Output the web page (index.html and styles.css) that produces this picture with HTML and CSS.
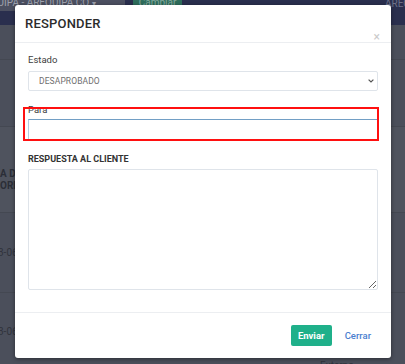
FILE: index.html
```html
<!DOCTYPE html>
<html lang="es">
<head>
<meta charset="utf-8">
<title>Responder</title>
<link rel="stylesheet" href="styles.css">
</head>
<body>
<div class="page">
  <div class="topbar">
    <div class="topbar-row">
      <div class="loc">AREQUIPA - AREQUIPA - AREQUIPA CO <span class="caret">▾</span></div>
      <div class="btn-cambiar">Cambiar</div>
      <div class="spacer"></div>
      <div class="user">AREQUIPA</div>
    </div>
  </div>
  <div class="bg-row r1"></div>
  <div class="bg-row r2"></div>
  <div class="bg-row head"><span>A DE</span><span>ORMA</span></div>
  <div class="bg-row r3"><span>3-06</span></div>
  <div class="bg-row r4"><span>3-06</span><span class="ext">Externo</span></div>
</div>

<div class="modal">
  <div class="modal-header">
    <h2 class="modal-title">RESPONDER</h2>
    <span class="close">×</span>
  </div>
  <div class="modal-body">
    <label class="field-label">Estado</label>
    <div class="select">
      <span>DESAPROBADO</span>
      <svg class="chev" width="6" height="4" viewBox="0 0 6 4"><path d="M0.6 0.6 L3 3 L5.4 0.6" fill="none" stroke="#555" stroke-width="1.2"/></svg>
    </div>
    <div class="group-para">
      <label class="field-label">Para</label>
      <input class="input" type="text">
      <div class="annot"></div>
    </div>
    <label class="field-label bold">RESPUESTA AL CLIENTE</label>
    <textarea class="textarea"></textarea>
  </div>
  <div class="modal-footer">
    <button class="btn-enviar">Enviar</button>
    <button class="btn-cerrar">Cerrar</button>
  </div>
</div>
</body>
</html>
```

FILE: styles.css
```css
* { box-sizing: border-box; }
html, body { margin: 0; padding: 0; }
body {
  width: 405px;
  height: 364px;
  overflow: hidden;
  position: relative;
  background: #4b4f5b;
  font-family: Roboto, "Liberation Sans", sans-serif;
}

/* backdrop page */
.page { width: 405px; }
.topbar {
  height: 25px;
  background: #2a2f4e;
  overflow: hidden;
}
.topbar-row {
  display: flex;
  align-items: center;
  height: 16px;
  margin-top: -5px;
  font-size: 10px;
}
.loc {
  width: 125px;
  height: 16px;
  line-height: 16px;
  background: #4c5061;
  color: #9ea1ad;
  white-space: nowrap;
  overflow: hidden;
  text-indent: -82px;
}
.caret { font-size: 8px; }
.btn-cambiar {
  margin-left: 8px;
  width: 49px;
  height: 16px;
  line-height: 16px;
  text-align: center;
  background: #2e6d5c;
  color: #86ab9f;
}
.spacer { flex: 1; }
.user {
  color: #6d7188;
  white-space: nowrap;
  width: 20px;
  overflow: visible;
  margin-right: 0;
}
.bg-row {
  border-bottom: 1px solid #444852;
  font-size: 10px;
  color: #30333c;
  display: flex;
  flex-direction: column;
  justify-content: center;
}
.r1 { height: 35px; }
.r2 { height: 67px; }
.head {
  height: 86px;
  background: #4f535e;
  font-weight: bold;
  line-height: 12px;
  padding-top: 20px;
  color: #2b2e37;
}
.r3 { height: 80px; padding-left: 0; margin-left: -2px; }
.r4 { height: 80px; position: relative; margin-left: -2px; justify-content: flex-start; padding-top: 33px; }
.ext {
  position: absolute;
  left: 322px;
  top: 67px;
  color: #30333c;
  font-size: 10px;
}

/* modal */
.modal {
  position: absolute;
  left: 15px;
  top: 5px;
  width: 376px;
  height: 353px;
  background: #fff;
  border-radius: 3px;
  box-shadow: 0 1px 4px rgba(0,0,0,0.45);
  display: flex;
  flex-direction: column;
}
.modal-header {
  height: 38px;
  padding: 11px 10px 0 10px;
  border-bottom: 1px solid #eceef1;
  display: flex;
  justify-content: space-between;
}
.modal-title {
  margin: 0;
  font-size: 13px;
  line-height: 15px;
  font-weight: 500;
  color: #2b2b2b;
  letter-spacing: 0.2px;
}
.close {
  align-self: flex-end;
  font-size: 12px;
  line-height: 10px;
  color: #cacaca;
  margin-bottom: 0px;
  margin-right: 1px;
}
.modal-body {
  flex: 1;
  padding: 11px 13px 22px 13px;
  display: flex;
  flex-direction: column;
}
.field-label {
  display: block;
  font-size: 9.5px;
  line-height: 12px;
  color: #3d3d3d;
}
.field-label.bold {
  font-weight: bold;
  font-size: 9px;
  color: #333;
  margin-top: 12px;
}
.select {
  margin-top: 5px;
  height: 20px;
  border: 1px solid #dfe4ea;
  border-radius: 2px;
  display: flex;
  align-items: center;
  justify-content: space-between;
  padding: 0 3px 0 10px;
  font-size: 8.5px;
  color: #6e6e6e;
  letter-spacing: 0.1px;
}
.chev { display: block; }
.group-para {
  position: relative;
  margin-top: 13px;
}
.input {
  display: block;
  width: 100%;
  margin-top: 3px;
  height: 22px;
  border: 1px solid #b5cde0;
  border-top-color: #729fc5;
  border-radius: 0;
  outline: none;
  padding: 0 6px;
}
.annot {
  position: absolute;
  left: -5px;
  right: -1px;
  top: 3px;
  bottom: 0;
  border: 2px solid #ff1010;
}
.textarea {
  display: block;
  margin-top: 4px;
  width: 100%;
  height: 121px;
  border: 1px solid #dfe4ea;
  border-radius: 2px;
  resize: both;
  outline: none;
  font-family: inherit;
}
.modal-footer {
  height: 46px;
  border-top: 1px solid #eceef1;
  display: flex;
  justify-content: flex-end;
  align-items: flex-start;
  padding: 12px 14px 0 0;
  gap: 7px;
}
.btn-enviar {
  height: 21px;
  width: 41px;
  padding: 0;
  border: none;
  border-radius: 2px;
  background: #1fb08a;
  color: #fff;
  font-family: inherit;
  font-weight: bold;
  font-size: 9.5px;
}
.btn-cerrar {
  height: 21px;
  padding: 0 6px;
  border: none;
  background: transparent;
  color: #4a7fcf;
  font-family: inherit;
  font-weight: 500;
  font-size: 9.5px;
}
```
